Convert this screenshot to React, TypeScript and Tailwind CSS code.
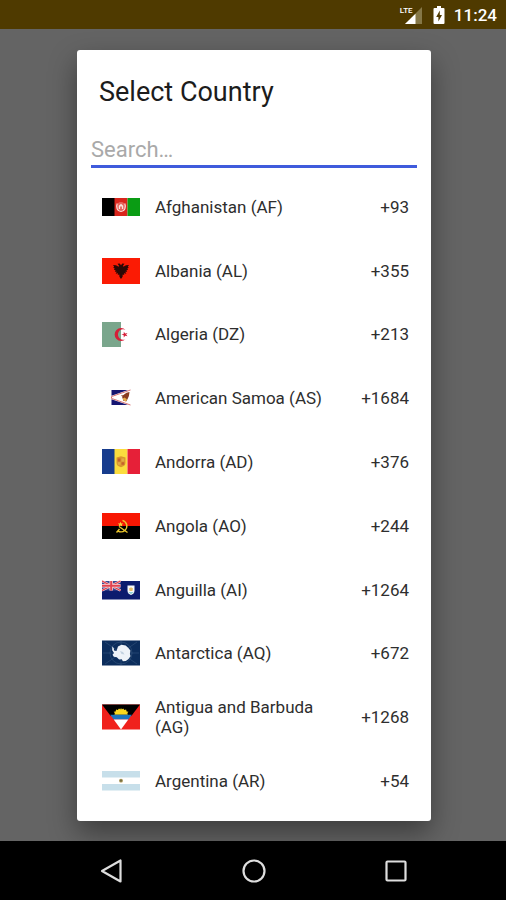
import { useState } from "react";

type Country = {
  name: string;
  code: string;
  dial: string;
};

const countries: Country[] = [
  { name: "Afghanistan", code: "AF", dial: "+93" },
  { name: "Albania", code: "AL", dial: "+355" },
  { name: "Algeria", code: "DZ", dial: "+213" },
  { name: "American Samoa", code: "AS", dial: "+1684" },
  { name: "Andorra", code: "AD", dial: "+376" },
  { name: "Angola", code: "AO", dial: "+244" },
  { name: "Anguilla", code: "AI", dial: "+1264" },
  { name: "Antarctica", code: "AQ", dial: "+672" },
  { name: "Antigua and Barbuda", code: "AG", dial: "+1268" },
  { name: "Argentina", code: "AR", dial: "+54" },
];

// every flag is drawn on a 38x26 box, wide flags leave the top and bottom empty
const flags: Record<string, React.ReactNode> = {
  AF: (
    <>
      <path fill="#000" d="M0 4h13v18H0z" />
      <path fill="#d8251c" d="M12.5 4h13v18h-13z" />
      <path fill="#0a9c14" d="M25.5 4H38v18H25.5z" />
      <circle cx="19" cy="12.8" r="4.8" fill="#f08d84" fillOpacity=".6" />
      <path
        fill="none"
        stroke="#fbe3df"
        strokeWidth="1.1"
        d="M15.2 9.5c-1.6 4 .3 8 3.8 8s5.4-4 3.8-8"
      />
      <path fill="#fbe3df" d="M16.8 15v-3.2l2.2-2 2.2 2V15z" />
      <path fill="#d8251c" d="M18.4 12.4h1.2V15h-1.2z" />
    </>
  ),
  AL: (
    <>
      <path fill="#fb1b04" d="M0 0h38v26H0z" />
      <path
        fill="#2c0805"
        d="m19 7.3-1.3-1.8-2.2.3 1.4 1.6-.2 1.4-2.7-1.5-3-.3 1.2 1.8-1 .8 1.5.9-.8 1.2 1.7.6-.8 1.4 1.9.1-1 1.9 2.4-.4-.4 1.8 1.6-.6.1 2.2L19 21l1.6-2.3.1-2.2 1.6.6-.4-1.8 2.4.4-1-1.9 1.9-.1-.8-1.4 1.7-.6-.8-1.2 1.5-.9-1-.8L27 7l-3 .3-2.7 1.5-.2-1.4 1.4-1.6-2.2-.3z"
      />
    </>
  ),
  DZ: (
    <>
      <path fill="#7aa68c" d="M0 1h19v25H0z" />
      <path
        fill="#d51f38"
        d="M23.5 8.7a6.5 6.5 0 1 0 0 9.6 5.3 5.3 0 1 1 0-9.6z"
      />
      <path
        fill="#d51f38"
        d="m19.4 13.5 2.3-.6.1-2.2 1.4 1.8 2.3-.6-1.4 1.6 1.4 1.8-2.3-.6-1.4 1.8-.1-2.3z"
      />
    </>
  ),
  AS: (
    <>
      <path fill="#151571" d="M9.5 5H26L9.5 10.8zM9.5 14.2 26 20H9.5z" />
      <path
        fill="none"
        stroke="#c63a3a"
        strokeWidth=".7"
        d="M28.5 5 9.5 11.6v1.8L28.5 20"
      />
      <path
        fill="#8a3c20"
        d="m27.5 7-3 .8-3.5 2.4-2.2.3 1.8 1.2-.6 1.6 1.6.2-.4 2.5 2.2-.6.6 1.3 1.6-2.7 1.3-3z"
      />
      <path fill="#e6ad4c" d="m20.5 14 2-1.5 2.5 1.8-1.5 2.4z" />
    </>
  ),
  AD: (
    <>
      <path fill="#173c8d" d="M0 0h13v25H0z" />
      <path fill="#fbdc3e" d="M12.5 0h13v25h-13z" />
      <path fill="#e62038" d="M25.5 0H38v25H25.5z" />
      <path
        fill="#d9952e"
        d="M14.5 8.5 19 7.3l4.5 1.2v5.3c0 2.5-2 3.7-4.5 4.4-2.5-.7-4.5-1.9-4.5-4.4z"
      />
      <path fill="#c6602d" d="M15.8 9.5h2.7v3h-2.7zM19.5 13.3h2.7v2.5h-2.7z" />
      <path fill="#e3aa46" d="M19.5 9.5h2.7v3h-2.7zM15.8 13.3h2.7v2.5h-2.7z" />
    </>
  ),
  AO: (
    <>
      <path fill="#f81703" d="M0 0h38v13H0z" />
      <path fill="#000" d="M0 13h38v13H0z" />
      <path
        fill="none"
        stroke="#e9c52d"
        strokeWidth="1.4"
        d="M20.5 7.3c4.8 1.6 5.6 7 2.5 9.9-2 1.9-4.8 2-7 .9M14.5 19.5l3-3.5M17 13.5l8.500 6"
      />
      <path
        fill="#f5d63a"
        d="m18.5 8.7.8 1.7 2 .1-1.5 1.3.5 1.8-1.8-1-1.7 1 .4-1.8-1.4-1.3 1.9-.1z"
      />
    </>
  ),
  AI: (
    <>
      <path fill="#0c1c6e" d="M0 4h38v18.500H0z" />
      <path fill="#3a4893" d="M0 4h18.500v9.500H0z" />
      <path stroke="#f7dede" strokeWidth="2.4" d="m0 4 18.500 9.500M18.500 4 0 13.500" />
      <path stroke="#dd3d4b" strokeWidth="1.4" d="m0 4 18.500 9.500M18.500 4 0 13.500" />
      <path stroke="#f7dede" strokeWidth="3.4" d="M9.2 4v9.500M0 8.7h18.500" />
      <path stroke="#e04350" strokeWidth="2" d="M9.2 4v9.500M0 8.7h18.500" />
      <path
        fill="#f8fafa"
        d="M25.5 8.5h7v5.2c0 2.2-1.4 3.4-3.5 4.3-2.1-.9-3.5-2.1-3.5-4.3z"
      />
      <path fill="#e8be6a" d="m27 11.5 2-1.3 2 1.3-.6 2.5h-2.8z" />
      <path fill="#8fd0d6" d="M26.2 15h5.6L29 17.3z" />
    </>
  ),
  AQ: (
    <>
      <path fill="#0c2d5c" d="M0 .5h38v25H0z" />
      <path
        fill="none"
        stroke="#47688d"
        strokeWidth=".4"
        d="m3 2 32 22M35 2 3 24M19 1v24M1 13h36"
      />
      <circle cx="19" cy="13" r="11" fill="none" stroke="#47688d" strokeWidth=".4" />
      <path
        fill="#eef3f8"
        d="m10.3 6.5 1.5 1.7.2 2.3 2.5.5 1.5-4.6 3.5-1.6 4.2.7 2.7 2.5 2 2.5-.5 3.3.6 2.5-2.2 3-2.5 1.7-3 .2-1-2-2.7.2-2.3-2.2-3-.4-1.3-2 1.5-1.7-1.8-2.8z"
      />
      <path fill="#c3d2e0" d="m18 11 3 1 1.5 2.5-3-.6z" />
    </>
  ),
  AG: (
    <>
      <path fill="#f0211c" d="M0 .5h38v25H0z" />
      <path fill="#000" d="M0 .5h38l-8.5 11.3h-21z" />
      <path
        fill="#fbd81c"
        d="m12.5 10.8.3-1.7-1.1-1.4 1.9-.3.5-1.9 1.7.6 1.2-1.6 1.3 1L19 4l.9 1.5 1.3-1 1.2 1.6 1.7-.6.5 1.9 1.9.3-1.1 1.4.3 1.7z"
      />
      <path fill="#1b74bd" d="M8.2 10.8h21.6l-3.5 4.7H11.7z" />
      <path fill="#fff" d="M11.7 15.5h14.6L19 25.5z" />
    </>
  ),
  AR: (
    <>
      <path fill="#c7dfea" d="M0 3h38v6.5H0zM0 16h38v6.5H0z" />
      <circle cx="19" cy="12.7" r="1.9" fill="#a59152" />
      <circle cx="19" cy="12.7" r=".9" fill="#6b6840" />
    </>
  ),
};

const StatusBar = () => (
  <header className="flex h-[29px] items-center justify-end bg-[#4f3a00] pr-[9px] pt-px text-white">
    {/* signal */}
    <span className="relative mr-[11px] block h-[18px] w-[22px]">
      <svg viewBox="0 0 22 18" className="h-full w-full" aria-hidden="true">
        <path fill="#857747" d="M22 1v17H5z" />
        <path fill="#fff" d="M15.5 7.8V18H5z" />
      </svg>
      <span className="absolute left-0 top-0 bg-[#4f3a00] text-[8px] font-medium leading-[9px]">
        LTE
      </span>
    </span>
    <svg viewBox="0 0 12 18" className="mr-[9px] h-[18px] w-3" aria-hidden="true">
      <path
        fill="#fff"
        d="M4 0h4v2h2.5q1 0 1 1v14q0 1-1 1h-9q-1 0-1-1V3q0-1 1-1H4z"
      />
      <path fill="#4f3a00" d="M6.8 4.5 3.2 11h2.2v4.5L9 9H6.8z" />
    </svg>
    <time className="text-[17px] font-medium leading-6">11:24</time>
  </header>
);

const NavBar = () => (
  <nav className="flex h-[59px] items-center justify-center gap-[118px] bg-black pl-px text-[#dedede]">
    <button type="button" aria-label="Back">
      <svg viewBox="0 0 24 24" className="h-6 w-6" fill="none" stroke="currentColor" strokeWidth="2.2" strokeLinejoin="round">
        <path d="M20.5 1.5v21L2 12z" />
      </svg>
    </button>
    <button type="button" aria-label="Home">
      <svg viewBox="0 0 24 24" className="h-6 w-6" fill="none" stroke="currentColor" strokeWidth="2.2">
        <circle cx="12" cy="12" r="10.5" />
      </svg>
    </button>
    <button type="button" aria-label="Recent apps">
      <svg viewBox="0 0 24 24" className="h-6 w-6" fill="none" stroke="currentColor" strokeWidth="2.2" strokeLinejoin="round">
        <rect x="2.5" y="2.5" width="19" height="19" rx="1" />
      </svg>
    </button>
  </nav>
);

const CountryRow = ({ country }: { country: Country }) => (
  <li className="flex max-h-16 flex-1">
    <button
      type="button"
      className="flex min-h-12 w-full items-center pl-[25px] pr-[22px] text-left text-[17px] leading-5 text-[#2e2e2e]"
    >
      <svg viewBox="0 0 38 26" className="h-[26px] w-[38px] shrink-0" aria-hidden="true">
        {flags[country.code]}
      </svg>
      <span className="ml-[15px] flex-1 pr-6">
        {country.name} ({country.code})
      </span>
      <span>{country.dial}</span>
    </button>
  </li>
);

export default function App() {
  const [search, setSearch] = useState("");

  const filtered = countries.filter((c) =>
    c.name.toLowerCase().includes(search.toLowerCase())
  );

  return (
    <div className="flex min-h-screen flex-col bg-[#646464] font-[Roboto,sans-serif]">
      <StatusBar />
      <main className="flex flex-1 flex-col pb-5 pl-[77px] pr-[75px] pt-[21px]">
        <section
          role="dialog"
          aria-labelledby="title"
          className="flex flex-1 flex-col rounded-[3px] bg-white pb-2 shadow-[0_12px_28px_rgba(0,0,0,0.4)]"
        >
          <h1 id="title" className="px-[22px] pt-6 text-[27px] leading-9 text-[#1c1c1c]">
            Select Country
          </h1>
          <input
            type="text"
            aria-label="Search"
            placeholder="Search…"
            value={search}
            onChange={(e) => setSearch(e.target.value)}
            className="mx-[14px] mt-5 h-[38px] border-b-[3px] border-[#3f5bdc] pt-[3px] text-[22px] text-[#1c1c1c] outline-none placeholder:text-[#a9a9a9]"
          />
          <ul className="mt-[7px] flex flex-1 flex-col">
            {filtered.map((c) => (
              <CountryRow key={c.code} country={c} />
            ))}
          </ul>
        </section>
      </main>
      <NavBar />
    </div>
  );
}
